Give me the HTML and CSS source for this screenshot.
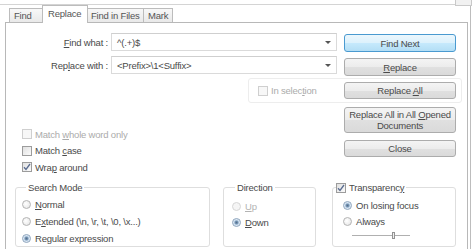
FILE: index.html
```html
<!DOCTYPE html>
<html lang="en">
<head>
    <meta charset="UTF-8">
    <title>Replace</title>
    <link rel="stylesheet" href="styles.css">
</head>
<body>
<div class="topbar"><span class="corner"></span></div>
<div class="window">
    <div class="tabs">
        <div class="tab t-find">Find</div>
        <div class="tab t-replace active">Replace</div>
        <div class="tab t-files">Find in Files</div>
        <div class="tab t-mark">Mark</div>
    </div>

    <div class="panel">
        <div class="top">
            <!-- left side: search fields and options -->
            <div class="fields">
                <div class="field">
                    <label><u>F</u>ind what :</label>
                    <div class="combo"><span>^(.+)$</span><i class="arrow"></i></div>
                </div>
                <div class="field second">
                    <label>Rep<u>l</u>ace with :</label>
                    <div class="combo"><span>&lt;Prefix&gt;\1&lt;Suffix&gt;</span><i class="arrow"></i></div>
                </div>
                <div class="checks">
                    <div class="check disabled"><span class="box"></span><span>Match <u>w</u>hole word only</span></div>
                    <div class="check"><span class="box"></span><span>Match <u>c</u>ase</span></div>
                    <div class="check"><span class="box checked"><svg width="8" height="8" viewBox="0 0 8 8"><path d="M1 4.2 L3 6.5 L7 1" fill="none" stroke="#5a6c90" stroke-width="1.3"/></svg></span><span>Wra<u>p</u> around</span></div>
                </div>
            </div>

            <!-- right side: action buttons -->
            <div class="buttons">
                <button class="btn default">Find Next</button>
                <button class="btn b-replace"><u>R</u>eplace</button>
                <div class="selbox">
                    <div class="check disabled"><span class="box"></span><span>In selec<u>t</u>ion</span></div>
                    <button class="btn b-all">Replace <u>A</u>ll</button>
                </div>
                <button class="btn b-opened">Replace All in All <u>O</u>pened<br>Documents</button>
                <button class="btn b-close">Close</button>
            </div>
        </div>

        <div class="groups">
            <fieldset class="g-mode">
                <legend>Search Mode</legend>
                <div class="radio"><span class="dot"></span><span><u>N</u>ormal</span></div>
                <div class="radio"><span class="dot"></span><span>E<u>x</u>tended (\n, \r, \t, \0, \x...)</span></div>
                <div class="radio"><span class="dot on"></span><span>Re<u>g</u>ular expression</span></div>
            </fieldset>
            <fieldset class="g-dir">
                <legend>Direction</legend>
                <div class="radio disabled"><span class="dot"></span><span><u>U</u>p</span></div>
                <div class="radio"><span class="dot on"></span><span><u>D</u>own</span></div>
            </fieldset>
            <fieldset class="g-trans">
                <legend><span class="box checked"><svg width="8" height="8" viewBox="0 0 8 8"><path d="M1 4.2 L3 6.5 L7 1" fill="none" stroke="#5a6c90" stroke-width="1.3"/></svg></span><span>Transparenc<u>y</u></span></legend>
                <div class="radio"><span class="dot on"></span><span>On losing focus</span></div>
                <div class="radio"><span class="dot"></span><span>Always</span></div>
                <div class="slider"><span class="seg left"></span><span class="thumb"></span><span class="seg right"></span></div>
            </fieldset>
        </div>
    </div>
</div>
</body>
</html>
```

FILE: styles.css
```css
* {
    box-sizing: border-box;
}
body {
    margin: 0;
    width: 474px;
    height: 249px;
    overflow: hidden;
    background: #fff;
    font-family: "Liberation Sans", Arial, sans-serif;
    font-size: 9.5px;
    letter-spacing: -0.2px;
    color: #4a4a4a;
}
u {
    text-decoration: underline;
    text-underline-offset: 1px;
}
.topbar {
    height: 4px;
    display: flex;
    justify-content: flex-end;
}
.corner {
    width: 17px;
    height: 6px;
    margin-right: 2px;
    border: 1px solid #c9c9c9;
    border-top: none;
    background: #f1f1f1;
}
.window {
    width: 471px;
    height: 245px;
    border-top: 1px solid #d4d4d4;
    border-right: 1px solid #bdbdbd;
}

/* tabs */
.tabs {
    display: flex;
    align-items: flex-end;
    height: 17px;
    margin-left: 9px;
}
.tab {
    height: 14px;
    line-height: 13px;
    border: 1px solid #bcbcbc;
    border-bottom: none;
    border-right: none;
    background: linear-gradient(#f8f8f8, #e9e9e9);
    color: #555;
    white-space: nowrap;
}
.tab.active {
    height: 18px;
    margin-bottom: -1px;
    line-height: 15px;
    background: #fff;
    border-right: 1px solid #bcbcbc;
    position: relative;
    z-index: 1;
}
.tab.t-find { width: 33px; padding-left: 4px; }
.tab.t-replace { width: 46px; padding-left: 5px; }
.tab.t-files { width: 55px; padding-left: 3px; border-left: none; }
.tab.t-mark { width: 30px; padding-left: 4px; border-right: 1px solid #bcbcbc; }

/* panel */
.panel {
    margin-left: 5px;
    width: 463px;
    height: 227px;
    border: 1px solid #b8b8b8;
    border-bottom: none;
    background: #fff;
}
.top {
    display: flex;
    padding-top: 10px;
}
.fields {
    width: 332px;
    display: flex;
    flex-direction: column;
}
.field {
    display: flex;
    align-items: center;
    height: 18px;
}
.field.second {
    margin-top: 5px;
}
.field label {
    width: 102px;
    text-align: right;
}
.combo {
    width: 226px;
    height: 18px;
    margin-left: 3px;
    border: 1px solid #dadada;
    border-top-color: #cfcfcf;
    display: flex;
    align-items: center;
    justify-content: space-between;
    padding: 0 5px 0 5px;
}
.arrow {
    width: 0;
    height: 0;
    border-left: 3px solid transparent;
    border-right: 3px solid transparent;
    border-top: 3px solid #555;
}

.checks {
    margin-top: 52px;
}
.check {
    display: flex;
    align-items: center;
    height: 16.5px;
    padding-left: 16px;
}
.check.disabled {
    color: #ababab;
}
.box {
    width: 10px;
    height: 10px;
    margin-right: 3px;
    border: 1px solid #9c9c9c;
    background: linear-gradient(135deg, #e0e0e0, #fbfbfb);
    display: flex;
    align-items: center;
    justify-content: center;
    flex-shrink: 0;
}
.disabled .box {
    border-color: #cfcfcf;
    background: #f7f7f7;
}

/* buttons */
.buttons {
    width: 112px;
    margin-left: 6px;
    margin-top: 1px;
    display: flex;
    flex-direction: column;
}
.btn {
    display: block;
    width: 112px;
    height: 18px;
    padding: 0;
    font: inherit;
    letter-spacing: inherit;
    color: #4a4a4a;
    border: 1px solid #acacac;
    border-radius: 3px;
    background: linear-gradient(#f4f4f4 0%, #ececec 50%, #e0e0e0 51%, #dadada 100%);
    line-height: 11px;
}
.btn.default {
    border-color: #4a9ad0;
    background: linear-gradient(#ecf7fd 0%, #dcf1fc 50%, #c6e9fc 51%, #b3def5 100%);
}
.btn.b-replace {
    margin-top: 6px;
}
.selbox {
    margin: 2px -6px 0 -96px;
    height: 25px;
    border: 1px solid #ededed;
    border-radius: 3px;
    display: flex;
    align-items: center;
    padding: 0 5px 0 9px;
}
.selbox .check {
    padding-left: 0;
}
.btn.b-all {
    height: 17px;
    margin-left: auto;
}
.btn.b-opened {
    height: 26px;
    margin-top: 4px;
}
.btn.b-close {
    height: 17px;
    margin-top: 7px;
}

/* group boxes */
.groups {
    display: flex;
    align-items: flex-start;
    padding-left: 9px;
    margin-top: 6px;
}
fieldset {
    margin: 0;
    padding: 0;
    height: 65px;
    border: 1px solid #dedede;
    border-radius: 3px;
    min-width: 0;
}
legend {
    margin-left: 4px;
    padding: 0 2px;
    line-height: 12px;
}
.g-mode {
    width: 195px;
    padding: 2px 0 0 6px;
}
.g-dir {
    width: 93px;
    margin-left: 13px;
    padding: 5px 0 0 8px;
}
.g-dir legend {
    margin-left: 3px;
}
.g-mode .radio {
    height: 17px;
}
.g-trans {
    width: 124px;
    margin-left: 16px;
    padding: 4px 0 0 10px;
}
.g-trans legend {
    margin-left: -7px;
    padding: 0 2px 0 0;
    display: flex;
    align-items: center;
}
.radio {
    display: flex;
    align-items: center;
    height: 16px;
}
.radio.disabled {
    color: #b3b3b3;
}
.dot {
    width: 9px;
    height: 9px;
    margin-right: 4px;
    border-radius: 50%;
    border: 1px solid #b4b4b4;
    background: radial-gradient(circle at 40% 40%, #ffffff, #e2e2e2);
    flex-shrink: 0;
}
.disabled .dot {
    border-color: #d6d6d6;
    background: #f5f5f5;
}
.dot.on {
    border-color: #8ea5bd;
    background: radial-gradient(circle, #5a6f88 0, #6f8fb0 1.3px, #cfe0f0 2.6px, #f0f5fa 4px);
}
.slider {
    display: flex;
    align-items: center;
    height: 10px;
    margin-left: 9px;
    margin-top: 1px;
}
.seg {
    height: 1px;
    background: #b0b0b0;
}
.seg.left {
    width: 40px;
}
.seg.right {
    width: 15px;
}
.thumb {
    width: 3px;
    height: 7px;
    border: 1px solid #939393;
    background: #f0f0f0;
}
```
